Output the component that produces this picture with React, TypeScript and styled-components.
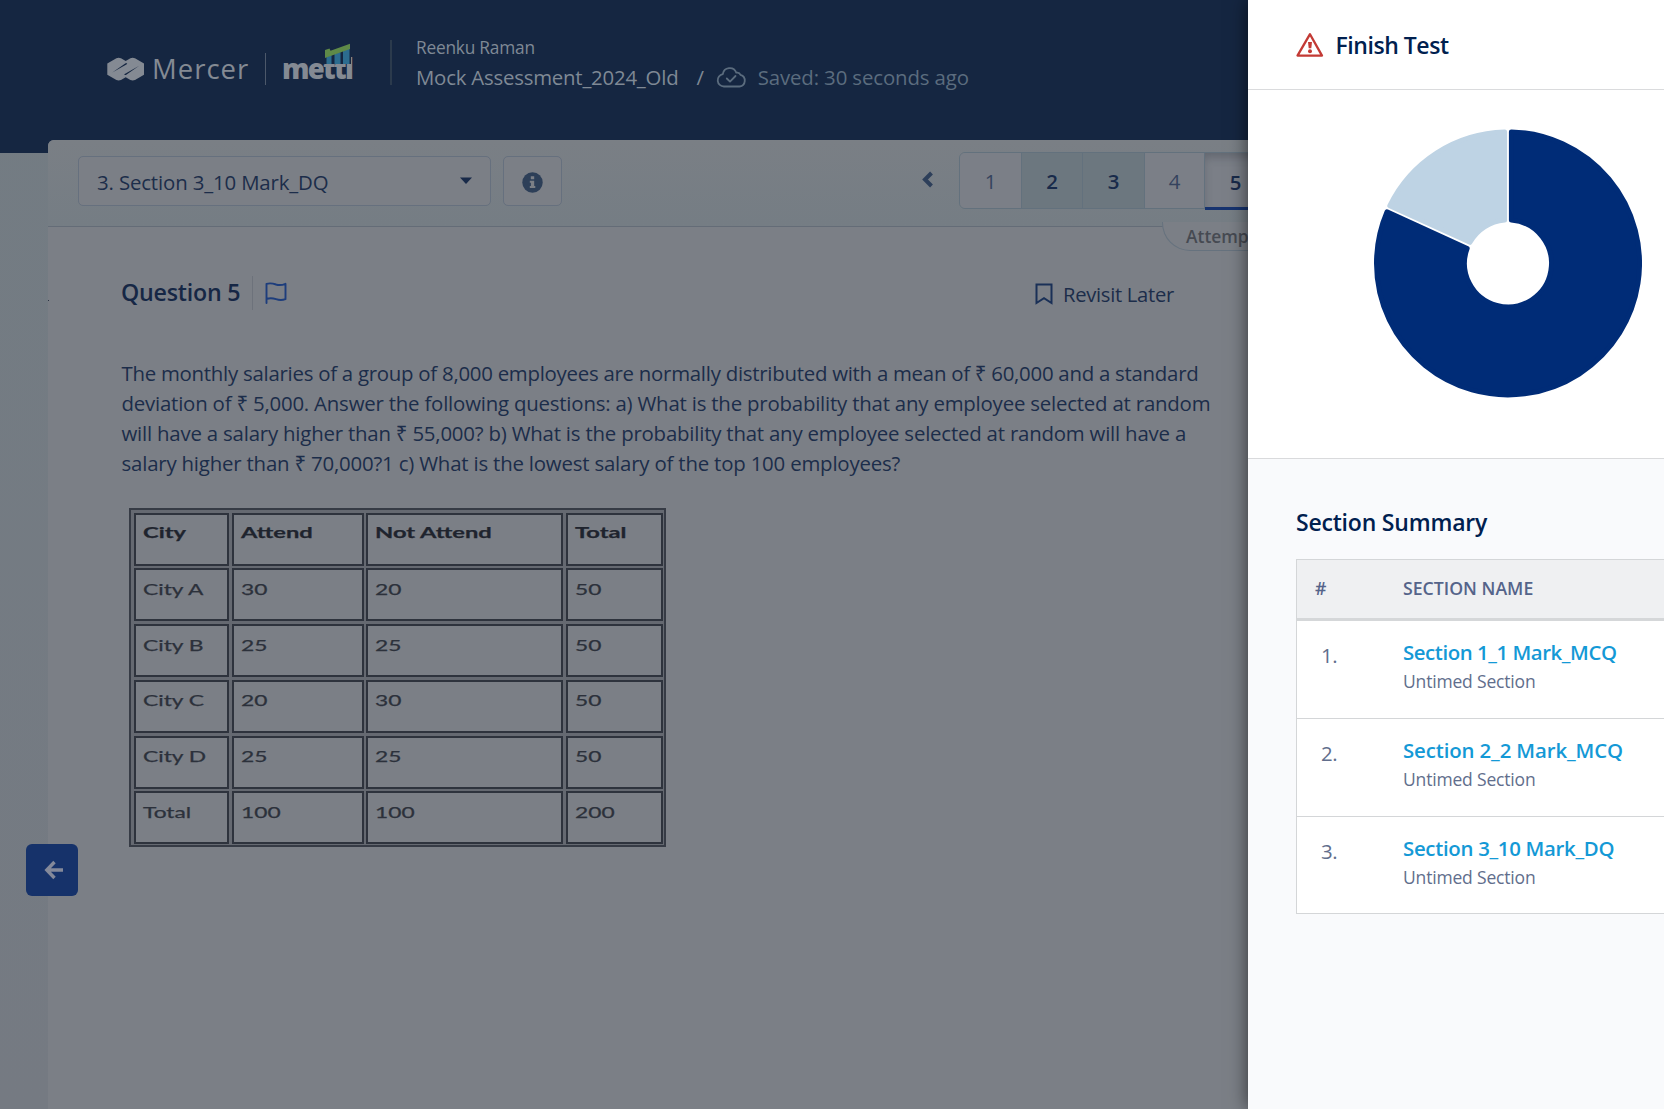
import React from "react";
import styled, { createGlobalStyle } from "styled-components";

const GlobalStyle = createGlobalStyle`
  * { box-sizing: border-box; }
  body {
    margin: 0;
    overflow: hidden;
    background: #737b82;
    font-family: "Open Sans", "Noto Sans", sans-serif;
    white-space: nowrap;
  }
  svg { display: block; flex: none; }
`;

const Page = styled.div`
  position: relative;
  width: 100%;
  height: 1109px;
  overflow: hidden;
  background: linear-gradient(#737c83, #757a82);
`;

/* ---------- top bar ---------- */

const TopBar = styled.header`
  display: flex;
  align-items: flex-start;
  height: 153px;
  padding-left: 107px;
  background: #152641;
`;

const MercerMark = styled.svg`
  margin-top: 57px;
`;

const BrandName = styled.span<{ $bold?: boolean }>`
  margin-top: 49px;
  font-size: 27.5px;
  line-height: 40px;
  font-weight: ${(p) => (p.$bold ? 800 : 500)};
  letter-spacing: ${(p) => (p.$bold ? "-1.7px" : "1px")};
  color: #848a93;
`;

const MercerWord = styled(BrandName)`
  width: 120px;
  padding-left: 7px;
`;

const MettlLogo = styled.div`
  position: relative;
  display: flex;
  width: 108px;
  margin-left: 16px;
`;

const MettlBars = styled.svg`
  position: absolute;
  left: 43px;
  top: 43px;
`;

const BarRule = styled.i<{ $top: number; $height: number; $width: number; $color: string }>`
  flex: none;
  width: ${(p) => p.$width}px;
  height: ${(p) => p.$height}px;
  margin-top: ${(p) => p.$top}px;
  background: ${(p) => p.$color};
`;

const Candidate = styled.div`
  display: flex;
  flex-direction: column;
  gap: 2px;
  margin: 36px 0 0 24px;
  color: #7f8995;
`;

const CandidateName = styled.div`
  font-size: 17.3px;
  line-height: 24px;
  letter-spacing: -0.21px;
`;

const TestLine = styled.div`
  display: flex;
  align-items: center;
  font-size: 20.4px;
  line-height: 30px;
  letter-spacing: -0.22px;
`;

const Slash = styled.span`
  margin: 0 12px 0 18px;
`;

const Saved = styled.span`
  margin-left: 11px;
  letter-spacing: -0.12px;
  color: #5b6c7e;
`;

/* ---------- test card ---------- */

const Card = styled.main`
  position: relative;
  height: 969px;
  margin: -13px 0 0 48px;
  border-radius: 6px 0 0 0;
  background: #7b7f86;
`;

const Toolbar = styled.div`
  display: flex;
  align-items: flex-start;
  height: 87px;
  padding: 12px 0 0 30px;
  border-bottom: 1px solid #646c77;
  border-radius: 6px 0 0 0;
  background: linear-gradient(#7a7f85, #757d84);
`;

const Field = styled.div<{ $width: number }>`
  display: flex;
  align-items: center;
  width: ${(p) => p.$width}px;
  height: 50px;
  margin: 4px 12px 0 0;
  border: 1px solid #66707e;
  border-radius: 5px;
  background: #7b7f86;
`;

const SectionSelect = styled(Field)`
  justify-content: space-between;
  padding: 2px 18px 0 18px;
  font-size: 20.4px;
  letter-spacing: -0.14px;
  color: #1c2d4a;
`;

const InfoButton = styled(Field)`
  justify-content: center;
  padding-top: 2px;
`;

const PrevIcon = styled.svg`
  margin: 19px 25px 0 348px;
`;

const Pager = styled.div`
  display: flex;
  height: 57px;
  border: 1px solid #63717d;
  border-radius: 6px 0 0 6px;
`;

const PageTab = styled.div<{ $tone?: "done" | "active" }>`
  display: flex;
  flex: none;
  align-items: center;
  justify-content: center;
  width: 61.4px;
  height: ${(p) => (p.$tone === "active" ? 57 : 55)}px;
  padding-top: ${(p) => (p.$tone === "active" ? 3 : 0)}px;
  border-right: 1px solid #63717d;
  border-bottom: ${(p) => (p.$tone === "active" ? "3px solid #17336f" : "none")};
  border-radius: ${(p) => (p.$tone ? "0" : "5px 0 0 5px")};
  background: ${(p) => (p.$tone === "done" ? "#6c777f" : "#7b7f87")};
  box-shadow: ${(p) => (p.$tone === "active" ? "inset 0 6px 10px -2px rgba(60, 66, 76, 0.4)" : "none")};
  font-size: 20.4px;
  font-weight: ${(p) => (p.$tone ? 600 : 500)};
  color: ${(p) => (p.$tone ? "#182a4a" : "#35435e")};
  &:first-child { width: 62px; }
  &:nth-child(4) { width: 60.6px; border-radius: 0; }
`;

const Attempted = styled.div`
  position: absolute;
  left: 1114px;
  top: 82px;
  width: 160px;
  height: 29px;
  padding-left: 23px;
  border: 1px solid #66727e;
  border-top: none;
  border-radius: 0 0 0 28px;
  background: #7b7f86;
  font-size: 17.4px;
  font-weight: 600;
  line-height: 28px;
  color: #464a52;
`;

const EdgeTick = styled.i`
  position: absolute;
  left: 0;
  top: 160px;
  width: 1px;
  height: 1px;
  background: #2b3444;
`;

const QuestionHead = styled.div`
  display: flex;
  align-items: center;
  height: 34px;
  margin: 49px 0 0 73px;
`;

const QuestionTitle = styled.h2`
  width: 131px;
  margin: -2px 0 0;
  font-size: 23.2px;
  font-weight: 600;
  line-height: 34px;
  letter-spacing: -0.2px;
  color: #162745;
`;

const TitleRule = styled.i`
  width: 1px;
  height: 34px;
  margin-right: 12px;
  background: #6d727b;
`;

const Revisit = styled.div`
  display: flex;
  align-items: center;
  gap: 10px;
  margin-left: 748px;
  padding-top: 1px;
  font-size: 20.2px;
  line-height: 34px;
  letter-spacing: -0.29px;
  color: #1c2d4a;
`;

const Question = styled.div`
  margin: 48px 0 0 73.5px;
  font-size: 20.4px;
  line-height: 30px;
  color: #1c2d4a;
`;

const QuestionLine = styled.div<{ $track: number }>`
  letter-spacing: ${(p) => p.$track}px;
`;

const CityTable = styled.div`
  display: grid;
  grid-template-columns: 95px 132px 197px 97px;
  grid-template-rows: repeat(6, 53px);
  gap: 2.8px 2.5px;
  width: 537px;
  height: 339px;
  margin: 30px 0 0 81px;
  padding: 2.5px 2px 1.5px 3px;
  border: 2px solid #363b45;
  background: #656971;
`;

const CityCell = styled.div<{ $head: boolean }>`
  padding: ${(p) => (p.$head ? 5 : 6.5)}px 0 0 7px;
  border: 2px solid #2e333d;
  background: #7b7f86;
  font-family: Lato, "Open Sans", sans-serif;
  font-size: 15.8px;
  font-weight: ${(p) => (p.$head ? 700 : 400)};
  line-height: 24px;
  color: ${(p) => (p.$head ? "#1f242e" : "#2c313b")};
  -webkit-text-stroke: 0.25px currentColor;
`;

const Stretch = styled.span<{ $x: number }>`
  display: inline-block;
  transform: scaleX(${(p) => p.$x});
  transform-origin: 0 50%;
`;

const BackButton = styled.button`
  position: absolute;
  left: 26px;
  top: 844px;
  display: flex;
  align-items: center;
  justify-content: center;
  width: 52px;
  height: 52px;
  padding: 0 0 0 3px;
  border: none;
  border-radius: 6px;
  background: #16326a;
`;

/* ---------- finish drawer ---------- */

const Drawer = styled.aside`
  position: absolute;
  left: 1248px;
  top: 0;
  width: 416px;
  height: 1109px;
  background: #f9fafc;
  box-shadow: 0 0 18px rgba(0, 0, 0, 0.6);
`;

const DrawerHead = styled.div`
  display: flex;
  align-items: center;
  gap: 12px;
  height: 90px;
  padding-left: 47.5px;
  border-bottom: 1px solid #dadbdd;
  background: #fff;
`;

const DrawerTitle = styled.h1<{ $track: number }>`
  margin: 0;
  font-size: 23px;
  font-weight: 600;
  line-height: 34px;
  letter-spacing: ${(p) => p.$track}px;
  color: #00204f;
`;

const ChartArea = styled.div`
  display: flex;
  height: 369px;
  padding: 39px 0 0 126px;
  border-bottom: 1px solid #d9dadc;
  background: #fff;
`;

const Summary = styled.section`
  padding: 46px 0 0 48px;
`;

const SummaryTable = styled.div`
  margin-top: 20px;
  border: 1px solid #d4d6d8;
  border-right: none;
`;

const SummaryHead = styled.div`
  display: grid;
  grid-template-columns: 88px 1fr;
  align-items: center;
  height: 61px;
  padding: 0 0 3px 18px;
  border-bottom: 3px solid #d5d7d9;
  background: #eff0f2;
  font-size: 17.7px;
  font-weight: 600;
  color: #55648a;
`;

const SummaryRow = styled.div`
  display: grid;
  grid-template-columns: 82px 1fr;
  align-items: start;
  height: 98px;
  padding: 16px 0 0 24px;
  border-bottom: 1px solid #d4d6d8;
  background: #fff;
  &:last-child {
    height: 96px;
    border-bottom: none;
  }
`;

const RowNumber = styled.span`
  padding-top: 3px;
  font-size: 20.4px;
  line-height: 30px;
  letter-spacing: -0.3px;
  color: #616e8c;
`;

const SectionLink = styled.div<{ $track: number }>`
  font-size: 20.4px;
  font-weight: 600;
  line-height: 30px;
  letter-spacing: ${(p) => p.$track}px;
  color: #1499d6;
`;

const SectionNote = styled.div`
  font-size: 17.5px;
  line-height: 28px;
  letter-spacing: -0.18px;
  color: #616e8c;
`;

const questionLines = [
  { track: -0.256, text: "The monthly salaries of a group of 8,000 employees are normally distributed with a mean of ₹ 60,000 and a standard" },
  { track: -0.2, text: "deviation of ₹ 5,000. Answer the following questions: a) What is the probability that any employee selected at random" },
  { track: -0.2, text: "will have a salary higher than ₹ 55,000? b) What is the probability that any employee selected at random will have a" },
  { track: -0.19, text: "salary higher than ₹ 70,000?1 c) What is the lowest salary of the top 100 employees?" },
];

const cityRows = [
  ["City", "Attend", "Not Attend", "Total"],
  ["City A", "30", "20", "50"],
  ["City B", "25", "25", "50"],
  ["City C", "20", "30", "50"],
  ["City D", "25", "25", "50"],
  ["Total", "100", "100", "200"],
];

const sections = [
  { name: "Section 1_1 Mark_MCQ", track: -0.44 },
  { name: "Section 2_2 Mark_MCQ", track: -0.12 },
  { name: "Section 3_10 Mark_DQ", track: -0.3 },
];

/* Ring slice between two clockwise angles (degrees from 12 o'clock). The
   path is inset so that its round-joined stroke softens the corners. */
function slice(from: number, to: number) {
  const outer = 131.6;
  const inner = 43.4;
  const inset = 3.3;
  const at = (r: number, deg: number, side: number) => {
    const a = (deg * Math.PI) / 180 + side * Math.asin(inset / r);
    return `${(134 + r * Math.sin(a)).toFixed(2)} ${(134.4 - r * Math.cos(a)).toFixed(2)}`;
  };
  const large = to - from > 180 ? 1 : 0;
  return `M${at(outer, from, 1)} A${outer} ${outer} 0 ${large} 1 ${at(outer, to, -1)} L${at(inner, to, -1)} A${inner} ${inner} 0 ${large} 0 ${at(inner, from, 1)} Z`;
}

const split = 360 * (9 / 11);

export default function App() {
  return (
    <Page>
      <GlobalStyle />
      <TopBar>
        <MercerMark width="38" height="24" viewBox="0 0 38 24">
          <path
            fill="#848a93"
            d="M.3 6.4 9.4 1.2Q11.600 .4 14 1.200L18.700 3.900 23.400 1.200Q25.700 .4 28 1.200L37 6.400V17.800L28 23Q25.700 23.800 23.400 23L18.700 20.300 14 23Q11.600 23.800 9.400 23L.3 17.800Z"
          />
          <path fill="#152641" d="M5.300 15.600 18.600 6.300 20.200 6.300 19.800 7.200ZM32.200 8.700 18.900 18 17.300 18 17.700 17.100Z" />
        </MercerMark>
        <MercerWord>Mercer</MercerWord>
        <BarRule $top={53} $height={32} $width={1} $color="#4c586a" />
        <MettlLogo>
          <BrandName $bold>mettl</BrandName>
          <MettlBars width="26" height="21" viewBox="0 0 26 21">
            <path fill="#152641" d="M0 0H26V21H0Z" />
            <path fill="#2c6c8f" d="M1.500 14 6.500 12V21H1.500ZM9.500 11 15.500 9V21H9.500ZM18 8 24.500 5V21H18Z" />
            <path fill="#5f8a48" d="M0 7 4.500 5.500 5.500 7.800 25 .8V6L0 15Z" />
          </MettlBars>
        </MettlLogo>
        <BarRule $top={40} $height={45} $width={2} $color="#2b3a4c" />
        <Candidate>
          <CandidateName>Reenku Raman</CandidateName>
          <TestLine>
            Mock Assessment_2024_Old
            <Slash>/</Slash>
            <svg width="31" height="22" viewBox="0 0 31 22" fill="none" stroke="#5b6c7e" strokeWidth="1.800" strokeLinecap="round" strokeLinejoin="round">
              <path d="M8 20.500H23.500A6 6 0 0 0 24.500 8.800 3.600 3.600 0 0 0 20.300 6.700 7 7 0 0 0 6.800 8.200 6.200 6.200 0 0 0 8 20.500Z" />
              <path d="M10.800 12.500 14 15.600 19.500 10" />
            </svg>
            <Saved>Saved: 30 seconds ago</Saved>
          </TestLine>
        </Candidate>
      </TopBar>

      <Card>
        <Toolbar>
          <SectionSelect $width={413}>
            3. Section 3_10 Mark_DQ
            <svg width="12" height="12" viewBox="0 0 12 12">
              <path fill="#182a49" d="M0 1.500H12L6 8Z" />
            </svg>
          </SectionSelect>
          <InfoButton $width={59}>
            <svg width="21" height="21" viewBox="0 0 21 21">
              <circle cx="10.500" cy="10.500" r="10.200" fill="#2d3f58" />
              <path fill="#7b7f86" d="M8.800 4.200H12.200V7.300H8.800ZM7.800 8.700H12.200V14H13.300V16H7.800V14H8.900V10.700H7.800Z" />
            </svg>
          </InfoButton>
          <PrevIcon width="12" height="17" viewBox="0 0 12 17">
            <path d="M9.500 2 3 8.500 9.500 15" fill="none" stroke="#2d3f5a" strokeWidth="4" />
          </PrevIcon>
          <Pager>
            <PageTab>1</PageTab>
            <PageTab $tone="done">2</PageTab>
            <PageTab $tone="done">3</PageTab>
            <PageTab>4</PageTab>
            <PageTab $tone="active">5</PageTab>
          </Pager>
        </Toolbar>
        <Attempted>Attempted</Attempted>
        <EdgeTick />

        <QuestionHead>
          <QuestionTitle>Question 5</QuestionTitle>
          <TitleRule />
          <svg width="22" height="22" viewBox="0 0 22 22" fill="none" stroke="#1d3d7c" strokeWidth="1.900" strokeLinejoin="round" strokeLinecap="round">
            <path d="M1.500 21V1.800C5 .9 7.500 1.200 11 2.500 14.500 3.600 17.500 3 20.500 1.800V17.200C17.500 18.300 14.500 18.400 11 17.200 7.500 16 5 15.800 1.500 17" />
          </svg>
          <Revisit>
            <svg width="18" height="22" viewBox="0 0 18 22" fill="none" stroke="#1a3057" strokeWidth="2">
              <path d="M1.500 1.500H16.500V20L9 15.200 1.500 20Z" />
            </svg>
            Revisit Later
          </Revisit>
        </QuestionHead>

        <Question>
          {questionLines.map((line) => (
            <QuestionLine key={line.text} $track={line.track}>
              {line.text}
            </QuestionLine>
          ))}
        </Question>

        <CityTable>
          {cityRows.map((row, r) =>
            row.map((cell, c) => (
              <CityCell key={`${r}-${c}`} $head={r === 0}>
                <Stretch $x={r === 0 ? 1.5 : 1.44}>{cell}</Stretch>
              </CityCell>
            ))
          )}
        </CityTable>
      </Card>

      <BackButton aria-label="Back">
        <svg width="20" height="20" viewBox="0 0 20 20" fill="none" stroke="#84899a" strokeWidth="3.400">
          <path d="M19 10H3M10.500 2 2.800 10 10.500 18" />
        </svg>
      </BackButton>

      <Drawer>
        <DrawerHead>
          <svg width="28" height="26" viewBox="0 0 28 26">
            <path d="M14 2.200 26 23.600H1.500Z" fill="none" stroke="#c33a35" strokeWidth="2.300" strokeLinejoin="round" />
            <path d="M12 10H16L15.300 16.200H12.700Z" fill="#c33a35" />
            <circle cx="14" cy="19.200" r="2" fill="#c33a35" />
          </svg>
          <DrawerTitle $track={-0.45}>Finish Test</DrawerTitle>
        </DrawerHead>
        <ChartArea>
          <svg width="268" height="269" viewBox="0 0 268 269">
            <path d={slice(0, split)} fill="#002c77" stroke="#002c77" strokeWidth="4.800" strokeLinejoin="round" />
            <path d={slice(split, 360)} fill="#bed3e4" stroke="#bed3e4" strokeWidth="4.800" strokeLinejoin="round" />
          </svg>
        </ChartArea>
        <Summary>
          <DrawerTitle as="h2" $track={-0.2}>
            Section Summary
          </DrawerTitle>
          <SummaryTable>
            <SummaryHead>
              <span>#</span>
              <span>SECTION NAME</span>
            </SummaryHead>
            {sections.map((section, i) => (
              <SummaryRow key={section.name}>
                <RowNumber>{i + 1}.</RowNumber>
                <div>
                  <SectionLink $track={section.track}>{section.name}</SectionLink>
                  <SectionNote>Untimed Section</SectionNote>
                </div>
              </SummaryRow>
            ))}
          </SummaryTable>
        </Summary>
      </Drawer>
    </Page>
  );
}
